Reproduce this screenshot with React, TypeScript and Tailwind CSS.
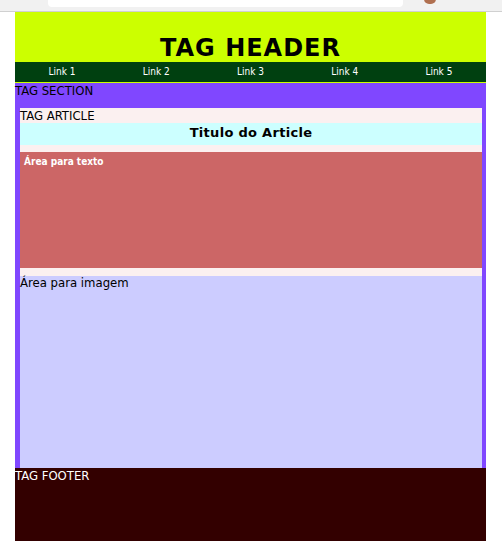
import React from "react";

export default function App() {
  const links = ["Link 1", "Link 2", "Link 3", "Link 4", "Link 5"];
  return (
    <div className="w-[502px] h-[558px] bg-white relative overflow-hidden" style={{ fontFamily: '"DejaVu Sans Condensed", "DejaVu Sans", sans-serif' }}>
      <div className="h-[12px] bg-[#f1f1f1] border-b border-[#d0d0d0] relative">
        <div className="absolute left-[48px] top-0 w-[355px] h-[7px] bg-white rounded-b-[4px]"></div>
        <div className="absolute left-[424px] -top-[6px] w-[12px] h-[10px] rounded-full bg-[#b07050]"></div>
      </div>
      <div className="ml-[15px] w-[471px]">
        <header className="h-[50px] bg-[#ccff00] flex items-end justify-center">
          <h1 className="text-[24px] leading-[24px] font-bold text-black mb-[2px] tracking-[1px]" style={{ fontFamily: '"DejaVu Sans", sans-serif' }}>TAG HEADER</h1>
        </header>
        <nav className="h-[21px] bg-[#004010] border-b border-[#ccff00] grid grid-cols-5">
          {links.map((l) => (
            <div key={l} className="flex justify-center items-center text-[10px] text-white leading-none">{l}</div>
          ))}
        </nav>
        <section className="bg-[#8047ff]">
          <div className="text-[13px] leading-[16px] h-[25px] text-black">TAG SECTION</div>
          <article className="bg-[#fbf0f0] ml-[5px] mr-[4px]">
            <div className="text-[13px] leading-[15px] h-[15px] text-black">TAG ARTICLE</div>
            <div className="h-[22px] bg-[#ccffff] flex justify-center items-center pb-[3px]">
              <h2 className="text-[13px] font-bold text-black tracking-[0.3px] leading-[16px]" style={{ fontFamily: '"DejaVu Sans", sans-serif' }}>Titulo do Article</h2>
            </div>
            <div className="h-[7px]"></div>
            <div className="h-[116px] bg-[#cc6666] pl-[4px] pt-[4px]">
              <p className="text-[10px] font-bold text-white leading-[12px]" style={{ fontFamily: '"DejaVu Sans Condensed", "DejaVu Sans", sans-serif' }}>Área para texto</p>
            </div>
            <div className="h-[8px]"></div>
            <div className="h-[192px] bg-[#ccccff]">
              <p className="text-[13px] leading-[14px] text-black">Área para imagem</p>
            </div>
          </article>
        </section>
        <footer className="h-[73px] bg-[#330000]">
          <p className="text-[13px] leading-[16px] text-white">TAG FOOTER</p>
        </footer>
      </div>
    </div>
  );
}
